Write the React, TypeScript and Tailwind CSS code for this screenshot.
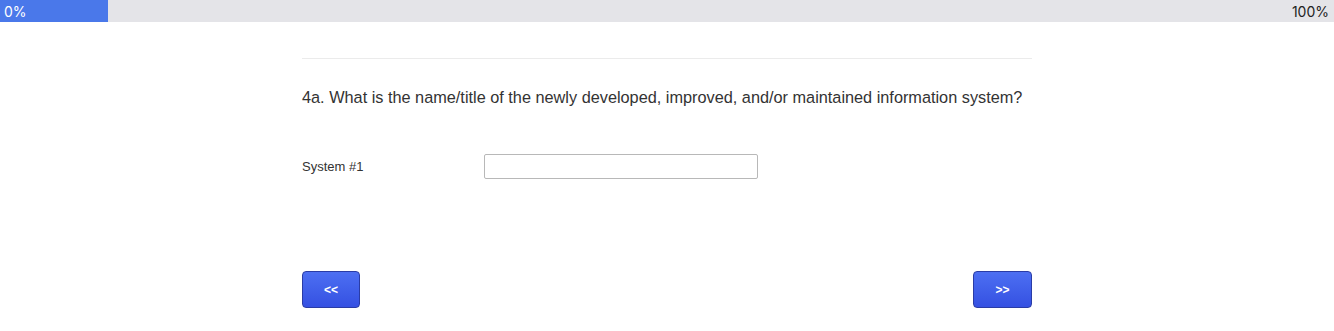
import React, { useState } from 'react';

const progress = 0;

const App = () => {
  const [system1, setSystem1] = useState('');

  return (
    <div className="min-h-[331px] bg-white font-['Liberation_Sans',Arial,sans-serif] text-[#333]">
      {/* progress bar */}
      <div className="relative flex h-[22px] items-center justify-between bg-[#e4e4e8] font-['Inter',sans-serif] text-[14px]">
        <div className="absolute inset-y-0 left-0 w-[108px] bg-[#4a78ea]" />
        <span className="relative pl-[4px] text-white">{progress}%</span>
        <span className="relative pr-[5px] text-[#222]">100%</span>
      </div>

      <div className="mx-auto w-[730px] pt-[36px]">
        <div className="border-t border-[#ebebeb]" />

        <p className="mt-[28px] text-[16.3px] leading-[20px] text-[#333]">
          4a. What is the name/title of the newly developed, improved, and/or maintained information system?
        </p>

        <div className="mt-[47px] flex items-center">
          <label className="w-[182px] text-[13px] text-[#333]">System #1</label>
          <input
            value={system1}
            onChange={e => setSystem1(e.target.value)}
            className="h-[25px] w-[274px] rounded-[2px] border border-[#b8b8b8] bg-white px-2 text-[13px] outline-none"
          />
        </div>

        <div className="mt-[92px] flex justify-between">
          <button className="h-[37px] w-[58px] rounded-[4px] border border-[#2a3ca6] bg-gradient-to-b from-[#4d6ff2] to-[#3550e2] text-[12px] font-bold text-white">
            &lt;&lt;
          </button>
          <button className="h-[37px] w-[59px] rounded-[4px] border border-[#2a3ca6] bg-gradient-to-b from-[#4d6ff2] to-[#3550e2] text-[12px] font-bold text-white">
            &gt;&gt;
          </button>
        </div>
      </div>
    </div>
  );
};

export default App;
